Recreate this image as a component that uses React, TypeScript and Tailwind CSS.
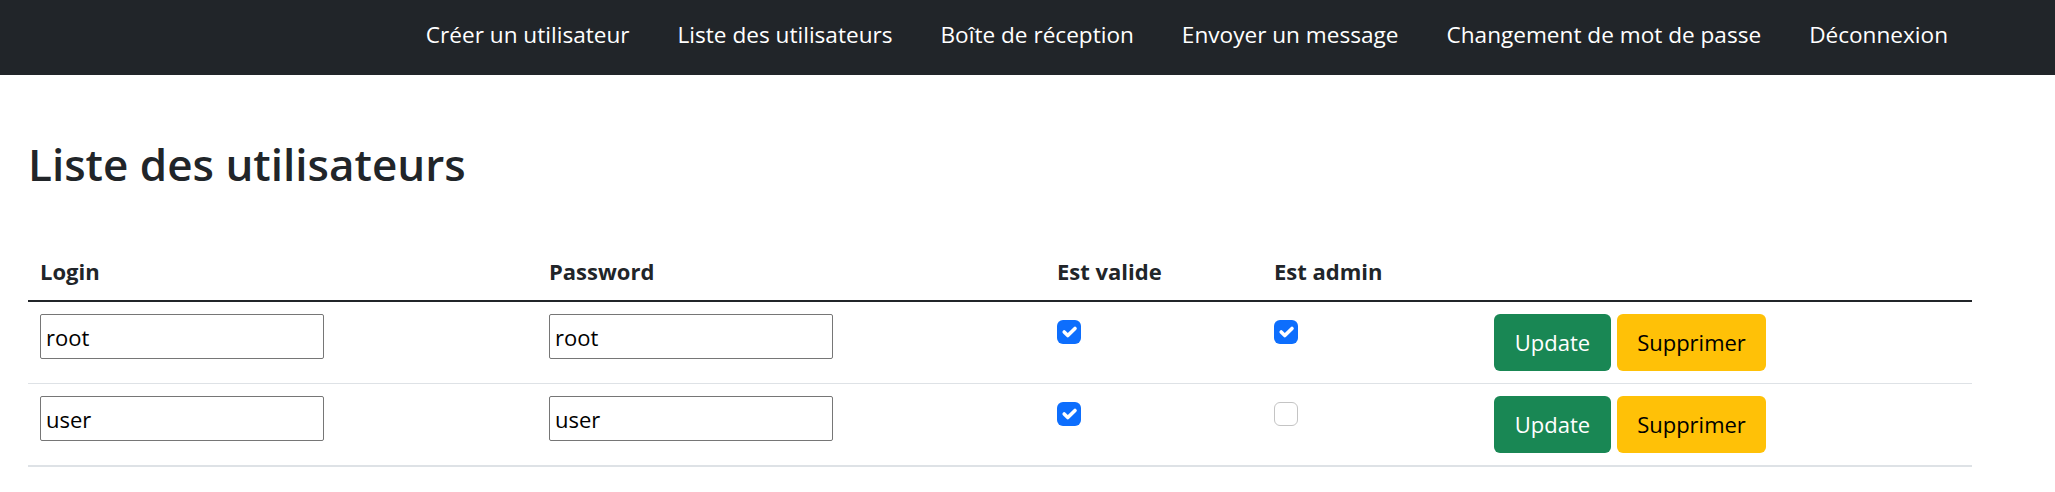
const NAV_LINKS = [
  "Créer un utilisateur",
  "Liste des utilisateurs",
  "Boîte de réception",
  "Envoyer un message",
  "Changement de mot de passe",
  "Déconnexion",
];

const USERS = [
  { login: "root", password: "root", valid: true, admin: true },
  { login: "user", password: "user", valid: true, admin: false },
];

function Check({ checked }: { checked: boolean }) {
  if (!checked) {
    return <span className="mt-[6px] block h-[24px] w-[24px] rounded-[6px] border-[1.5px] border-[#c4c4c4] bg-white" />;
  }
  return (
    <span className="mt-[6px] flex h-[24px] w-[24px] items-center justify-center rounded-[6px] bg-[#0d6efd]">
      <svg viewBox="0 0 20 20" className="h-[24px] w-[24px]" fill="none" stroke="#fff" strokeWidth="3" strokeLinecap="round" strokeLinejoin="round">
        <path d="m6 10 3 3 6-6" />
      </svg>
    </span>
  );
}

export default function App() {
  return (
    <div className="min-h-screen bg-white font-['Open_Sans',sans-serif] text-[22px] text-[#212529]">
      <nav className="flex h-[75px] justify-end gap-[48px] bg-[#212529] pr-[107px] pt-[18px]">
        {NAV_LINKS.map((label) => (
          <a key={label} href="#" className="text-[22.6px] leading-[33px] text-white">
            {label}
          </a>
        ))}
      </nav>

      <main className="px-[28px]">
        <h1 className="mt-[62px] text-[44px] font-semibold leading-[55px]">Liste des utilisateurs</h1>

        <table className="mt-[51px] w-[1944px] border-collapse">
          <thead>
            <tr>
              <th className="w-[509px] border-b-2 border-[#212529] p-[12px] text-left font-bold leading-[33px]">Login</th>
              <th className="w-[508px] border-b-2 border-[#212529] p-[12px] text-left font-bold leading-[33px]">Password</th>
              <th className="w-[217px] border-b-2 border-[#212529] p-[12px] text-left font-bold leading-[33px]">Est valide</th>
              <th className="w-[220px] border-b-2 border-[#212529] p-[12px] text-left font-bold leading-[33px]">Est admin</th>
              <th className="border-b-2 border-[#212529] p-[12px]"></th>
            </tr>
          </thead>
          <tbody>
            {USERS.map((u, i) => {
              const line = i === USERS.length - 1 ? "border-b-2" : "border-b";
              return (
                <tr key={u.login}>
                  <td className={`${line} border-[#dee2e6] p-[12px] align-top`}>
                    <input
                      defaultValue={u.login}
                      className="h-[45px] w-[284px] rounded-[2px] border border-[#767676] px-[5px] text-black outline-none"
                    />
                  </td>
                  <td className={`${line} border-[#dee2e6] p-[12px] align-top`}>
                    <input
                      defaultValue={u.password}
                      className="h-[45px] w-[284px] rounded-[2px] border border-[#767676] px-[5px] text-black outline-none"
                    />
                  </td>
                  <td className={`${line} border-[#dee2e6] p-[12px] align-top`}>
                    <Check checked={u.valid} />
                  </td>
                  <td className={`${line} border-[#dee2e6] p-[12px] align-top`}>
                    <Check checked={u.admin} />
                  </td>
                  <td className={`${line} border-[#dee2e6] p-[12px] align-top`}>
                    <div className="flex gap-[6px]">
                      <button className="h-[57px] w-[117px] rounded-[6px] bg-[#198754] text-white">Update</button>
                      <button className="h-[57px] w-[149px] rounded-[6px] bg-[#ffc107] text-black">Supprimer</button>
                    </div>
                  </td>
                </tr>
              );
            })}
          </tbody>
        </table>
      </main>
    </div>
  );
}
